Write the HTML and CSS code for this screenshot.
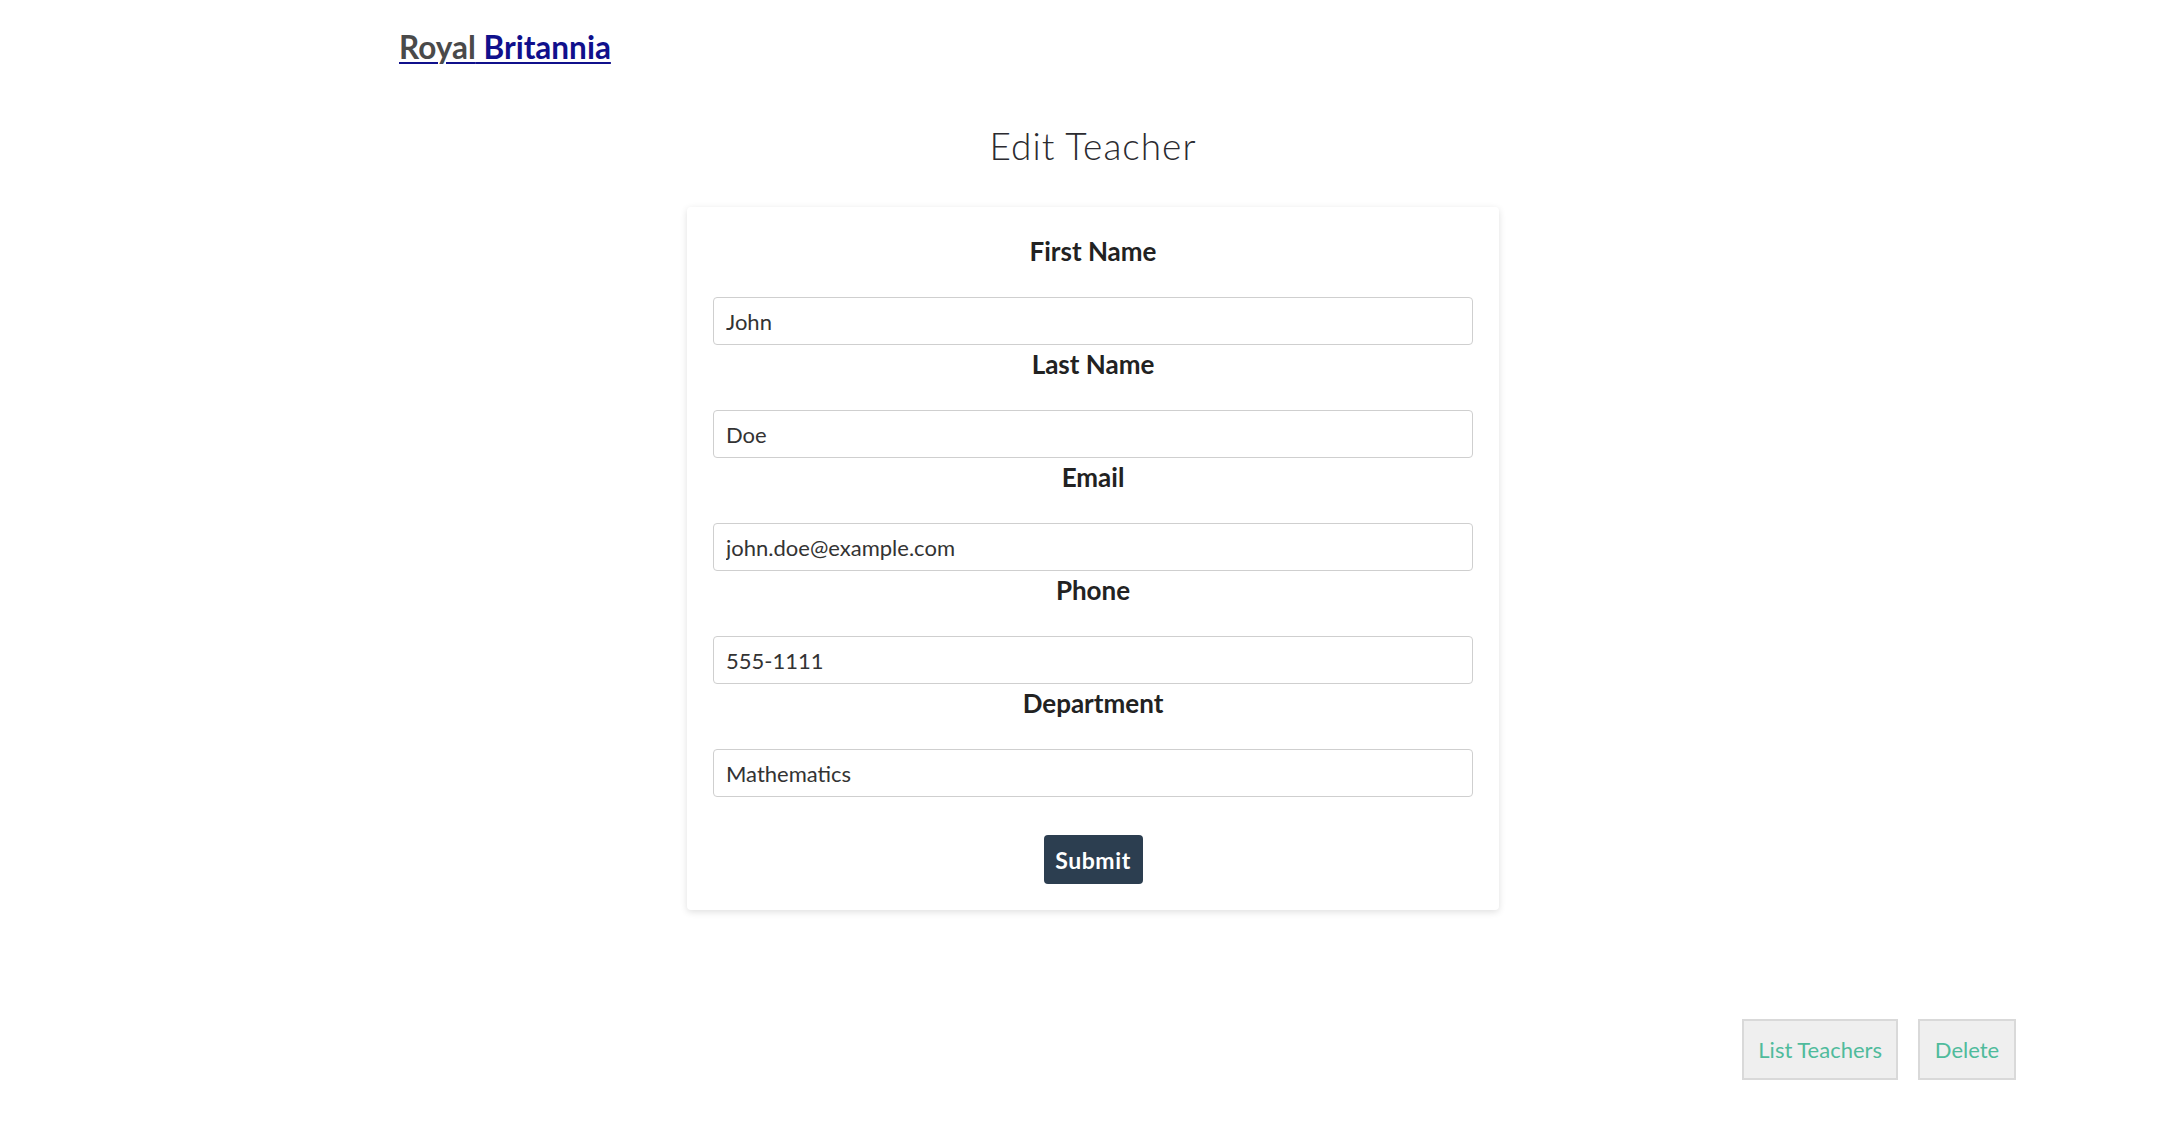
FILE: index.html
```html
<!DOCTYPE html>
<html lang="en">
<head>
<meta charset="utf-8">
<title>Edit Teacher</title>
<link rel="stylesheet" href="styles.css">
</head>
<body>
  <header class="site-header">
    <a class="brand" href="#"><span class="brand-royal">Royal</span> Britannia</a>
  </header>
  <main class="main">
    <h1 class="page-title">Edit Teacher</h1>
    <form class="card">
      <label class="field-label" for="first">First Name</label>
      <input class="field-input" id="first" type="text" value="John">
      <label class="field-label" for="last">Last Name</label>
      <input class="field-input" id="last" type="text" value="Doe">
      <label class="field-label" for="email">Email</label>
      <input class="field-input" id="email" type="text" value="john.doe@example.com">
      <label class="field-label" for="phone">Phone</label>
      <input class="field-input" id="phone" type="text" value="555-1111">
      <label class="field-label" for="dept">Department</label>
      <input class="field-input" id="dept" type="text" value="Mathematics">
      <div class="actions">
        <button class="submit" type="button">Submit</button>
      </div>
    </form>
  </main>
  <nav class="footer-links">
    <a class="link-btn" href="#">List Teachers</a>
    <a class="link-btn" href="#">Delete</a>
  </nav>
</body>
</html>
```

FILE: styles.css
```css
html, body {
  margin: 0;
  padding: 0;
  background: #ffffff;
}

body {
  font-family: Lato, "Open Sans", "Liberation Sans", sans-serif;
  color: #333333;
}

.site-header {
  padding: 29px 0 0 399px;
  height: 36px;
}

.brand {
  font-size: 31.5px;
  line-height: 36px;
  font-weight: 700;
  color: #10108c;
  text-decoration: underline;
  text-decoration-thickness: 2px;
  text-underline-offset: 3px;
}

.brand-royal {
  color: #4a4a4a;
}

.main {
  display: flex;
  flex-direction: column;
  align-items: center;
  padding-left: 6px;
}

.page-title {
  margin: 60px 0 40px;
  font-size: 37px;
  line-height: 42px;
  font-weight: 300;
  color: #2b2b30;
  letter-spacing: 1px;
}

.card {
  box-sizing: border-box;
  width: 812px;
  padding: 29px 26px 26px;
  background: #ffffff;
  border-radius: 4px;
  box-shadow: 0 2px 7px rgba(0, 0, 0, 0.13);
  display: flex;
  flex-direction: column;
}

.field-label {
  display: block;
  text-align: center;
  font-size: 26px;
  line-height: 31px;
  font-weight: 700;
  color: #222222;
  margin: 0 0 30px;
}

.field-input {
  box-sizing: border-box;
  width: 760px;
  height: 48px;
  margin: 0 0 4px;
  padding: 0 12px;
  border: 1px solid #cfcfcf;
  border-radius: 4px;
  font-family: Lato, "Open Sans", "Liberation Sans", sans-serif;
  font-size: 22px;
  color: #333333;
  background: #ffffff;
  outline: none;
}

.actions {
  display: flex;
  justify-content: center;
  margin-top: 34px;
}

.submit {
  box-sizing: border-box;
  width: 99px;
  height: 49px;
  padding: 0;
  border: none;
  border-radius: 4px;
  background: #2c3e50;
  color: #ffffff;
  font-family: Lato, "Open Sans", "Liberation Sans", sans-serif;
  font-size: 23px;
  font-weight: 700;
  letter-spacing: 0.6px;
}

.footer-links {
  display: flex;
  justify-content: flex-end;
  gap: 20px;
  margin-top: 109px;
  padding-right: 164px;
}

.link-btn {
  box-sizing: border-box;
  min-width: 98px;
  height: 61px;
  display: flex;
  align-items: center;
  justify-content: center;
  padding: 0 14px;
  background: #efefef;
  border: 2px solid #d9d9d9;
  color: #4fbb9c;
  font-size: 22px;
  text-decoration: none;
}
```
